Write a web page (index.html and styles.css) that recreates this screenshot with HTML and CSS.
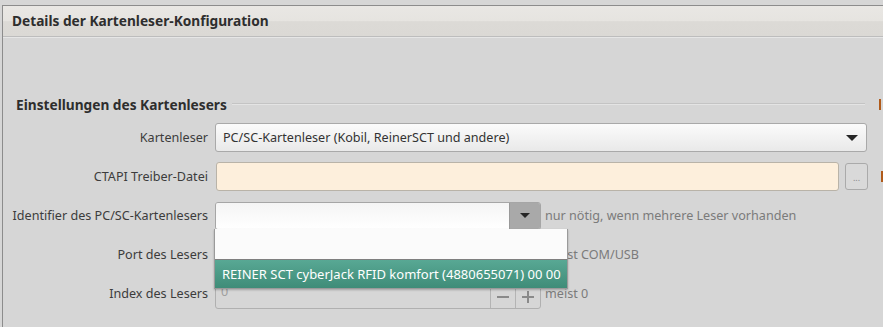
FILE: index.html
```html
<!DOCTYPE html>
<html lang="de">
<head>
    <meta charset="UTF-8">
    <meta name="viewport" content="width=device-width, initial-scale=1.0">
    <title>Kartenleser</title>
    <link rel="stylesheet" href="styles.css">
</head>
<body>
    <div class="frame">
        <div class="header">Details der Kartenleser-Konfiguration</div>

        <div class="content">
            <div class="section">
                <span class="section-title">Einstellungen des Kartenlesers</span>
                <span class="section-line"></span>
                <span class="mark"></span>
            </div>

            <div class="form">
                <!-- Kartenleser -->
                <div class="row">
                    <label class="lbl">Kartenleser</label>
                    <div class="combo wide">
                        <span>PC/SC-Kartenleser (Kobil, ReinerSCT und andere)</span>
                        <span class="arrow"></span>
                    </div>
                </div>

                <!-- CTAPI -->
                <div class="row">
                    <label class="lbl">CTAPI Treiber-Datei</label>
                    <div class="entry peach"></div>
                    <button class="dots">...</button>
                    <span class="mark"></span>
                </div>

                <!-- Identifier -->
                <div class="row">
                    <label class="lbl">Identifier des PC/SC-Kartenlesers</label>
                    <div class="combo-entry">
                        <div class="ce-text"></div>
                        <div class="ce-btn"><span class="arrow small"></span></div>
                    </div>
                    <span class="hint">nur nötig, wenn mehrere Leser vorhanden</span>

                    <div class="popup">
                        <div class="pop-empty"></div>
                        <div class="pop-item">REINER SCT cyberJack RFID komfort (4880655071) 00 00</div>
                    </div>
                </div>

                <!-- Port -->
                <div class="row">
                    <label class="lbl">Port des Lesers</label>
                    <div class="blank"></div>
                    <span class="hint">meist COM/USB</span>
                </div>

                <!-- Index -->
                <div class="row">
                    <label class="lbl">Index des Lesers</label>
                    <div class="spin">
                        <div class="spin-text">0</div>
                        <div class="spin-btn">
                            <svg width="14" height="14" viewBox="0 0 14 14"><path d="M1 7h12" stroke="#8a8a8a" stroke-width="2"/></svg>
                        </div>
                        <div class="spin-btn">
                            <svg width="14" height="14" viewBox="0 0 14 14"><path d="M1 7h12M7 1v12" stroke="#8a8a8a" stroke-width="2"/></svg>
                        </div>
                    </div>
                    <span class="hint">meist 0</span>
                </div>
            </div>
        </div>
    </div>
</body>
</html>
```

FILE: styles.css
```css
body {
    margin: 0;
    background: #d6d6d6;
    font-family: "Noto Sans", "Open Sans", sans-serif;
    font-size: 12.6px;
    color: #3c3c3c;
    overflow: hidden;
}

/* outer frame */
.frame {
    margin: 5px 0 0 2px;
    border-top: 1px solid #8c8c8c;
    border-left: 1px solid #8c8c8c;
    height: 330px;
}

.header {
    height: 30px;
    line-height: 30px;
    padding-left: 9px;
    font-size: 13.7px;
    font-weight: bold;
    color: #2e2e2e;
    background: linear-gradient(#e9e7e4, #e6e4e0 50%, #dcdad6 52%, #dbd9d5);
    border-bottom: 1px solid #bdbdbd;
    box-shadow: 0 1px 0 #e6e6e6;
}

.content {
    padding-top: 57px;
}

/* section heading */
.section {
    display: flex;
    align-items: center;
    height: 20px;
    padding-left: 13px;
}

.section-title {
    font-size: 13.7px;
    font-weight: bold;
    color: #2e2e2e;
    white-space: nowrap;
}

.section-line {
    flex: 1;
    height: 1px;
    margin-left: 5px;
    background: #c4c4c4;
    border-bottom: 1px solid #e4e4e4;
    max-width: 633px;
}

.mark {
    width: 2px;
    height: 11px;
    margin-left: 14px;
    background: #b05a1a;
}

/* form rows */
.form {
    padding-top: 9px;
    display: flex;
    flex-direction: column;
    gap: 10px;
}

.row {
    position: relative;
    display: flex;
    align-items: center;
    height: 29px;
}

.lbl {
    width: 212px;
    text-align: right;
    padding-right: 7px;
    box-sizing: border-box;
    color: #3c3c3c;
    white-space: nowrap;
    flex-shrink: 0;
}

.combo {
    display: flex;
    align-items: center;
    justify-content: space-between;
    box-sizing: border-box;
    height: 29px;
    padding: 0 8px 0 7px;
    border: 1px solid #a9a9a9;
    border-radius: 3px;
    background: linear-gradient(#fbfbfb, #e9e9e9);
    color: #333;
}

.combo.wide {
    width: 652px;
}

.arrow {
    width: 0;
    height: 0;
    border-left: 6px solid transparent;
    border-right: 6px solid transparent;
    border-top: 6px solid #262626;
}

.arrow.small {
    border-left-width: 5px;
    border-right-width: 5px;
    border-top-width: 5px;
}

.entry {
    box-sizing: border-box;
    width: 623px;
    height: 29px;
    margin-left: 1px;
    border: 1px solid #b9b3a8;
    border-radius: 3px;
}

.entry.peach {
    background: #fdefdc;
}

.dots {
    box-sizing: border-box;
    width: 23px;
    height: 27px;
    margin-left: 6px;
    padding: 0 0 4px;
    border: 1px solid #aaa;
    border-radius: 3px;
    background: #d9d9d9;
    color: #8a8a8a;
    font-family: "Noto Sans", sans-serif;
    font-size: 9px;
    line-height: 27px;
}

.row .dots + .mark {
    margin-left: 13px;
}

.combo-entry {
    display: flex;
    box-sizing: border-box;
    width: 326px;
    height: 28px;
    border: 1px solid #a6a6a6;
    border-radius: 3px;
    overflow: hidden;
}

.ce-text {
    flex: 1;
    background: linear-gradient(#f5f5f5, #ffffff);
}

.ce-btn {
    width: 30px;
    display: flex;
    align-items: center;
    justify-content: center;
    background: #a9a9a9;
    border-left: 1px solid #999;
}

.hint {
    margin-left: 4px;
    color: #7b7b7b;
    white-space: nowrap;
}

.blank {
    width: 326px;
}

/* dropdown popup */
.popup {
    position: absolute;
    left: 211px;
    top: 28px;
    width: 352px;
    border: 1px solid #9a9a9a;
    border-top: none;
    background: #fbfbfb;
    box-shadow: 0 1px 2px rgba(0, 0, 0, 0.25);
    z-index: 2;
}

.pop-empty {
    height: 30px;
    border-bottom: 1px solid #7f7f7f;
}

.pop-item {
    height: 28px;
    line-height: 28px;
    padding-left: 7px;
    font-size: 13px;
    color: #ffffff;
    background: linear-gradient(#58a894, #3f8c78);
    white-space: nowrap;
}

/* spin button */
.spin {
    display: flex;
    box-sizing: border-box;
    width: 326px;
    height: 27px;
    margin-top: 3px;
    border: 1px solid #b0b0b0;
    border-radius: 3px;
    background: #d6d6d6;
}

.spin-text {
    flex: 1;
    padding-left: 5px;
    color: #a0a0a0;
    line-height: 17px;
}

.spin-btn {
    width: 24px;
    display: flex;
    align-items: flex-end;
    justify-content: center;
    padding-bottom: 4px;
    border-left: 1px solid #b4b4b4;
}
```
